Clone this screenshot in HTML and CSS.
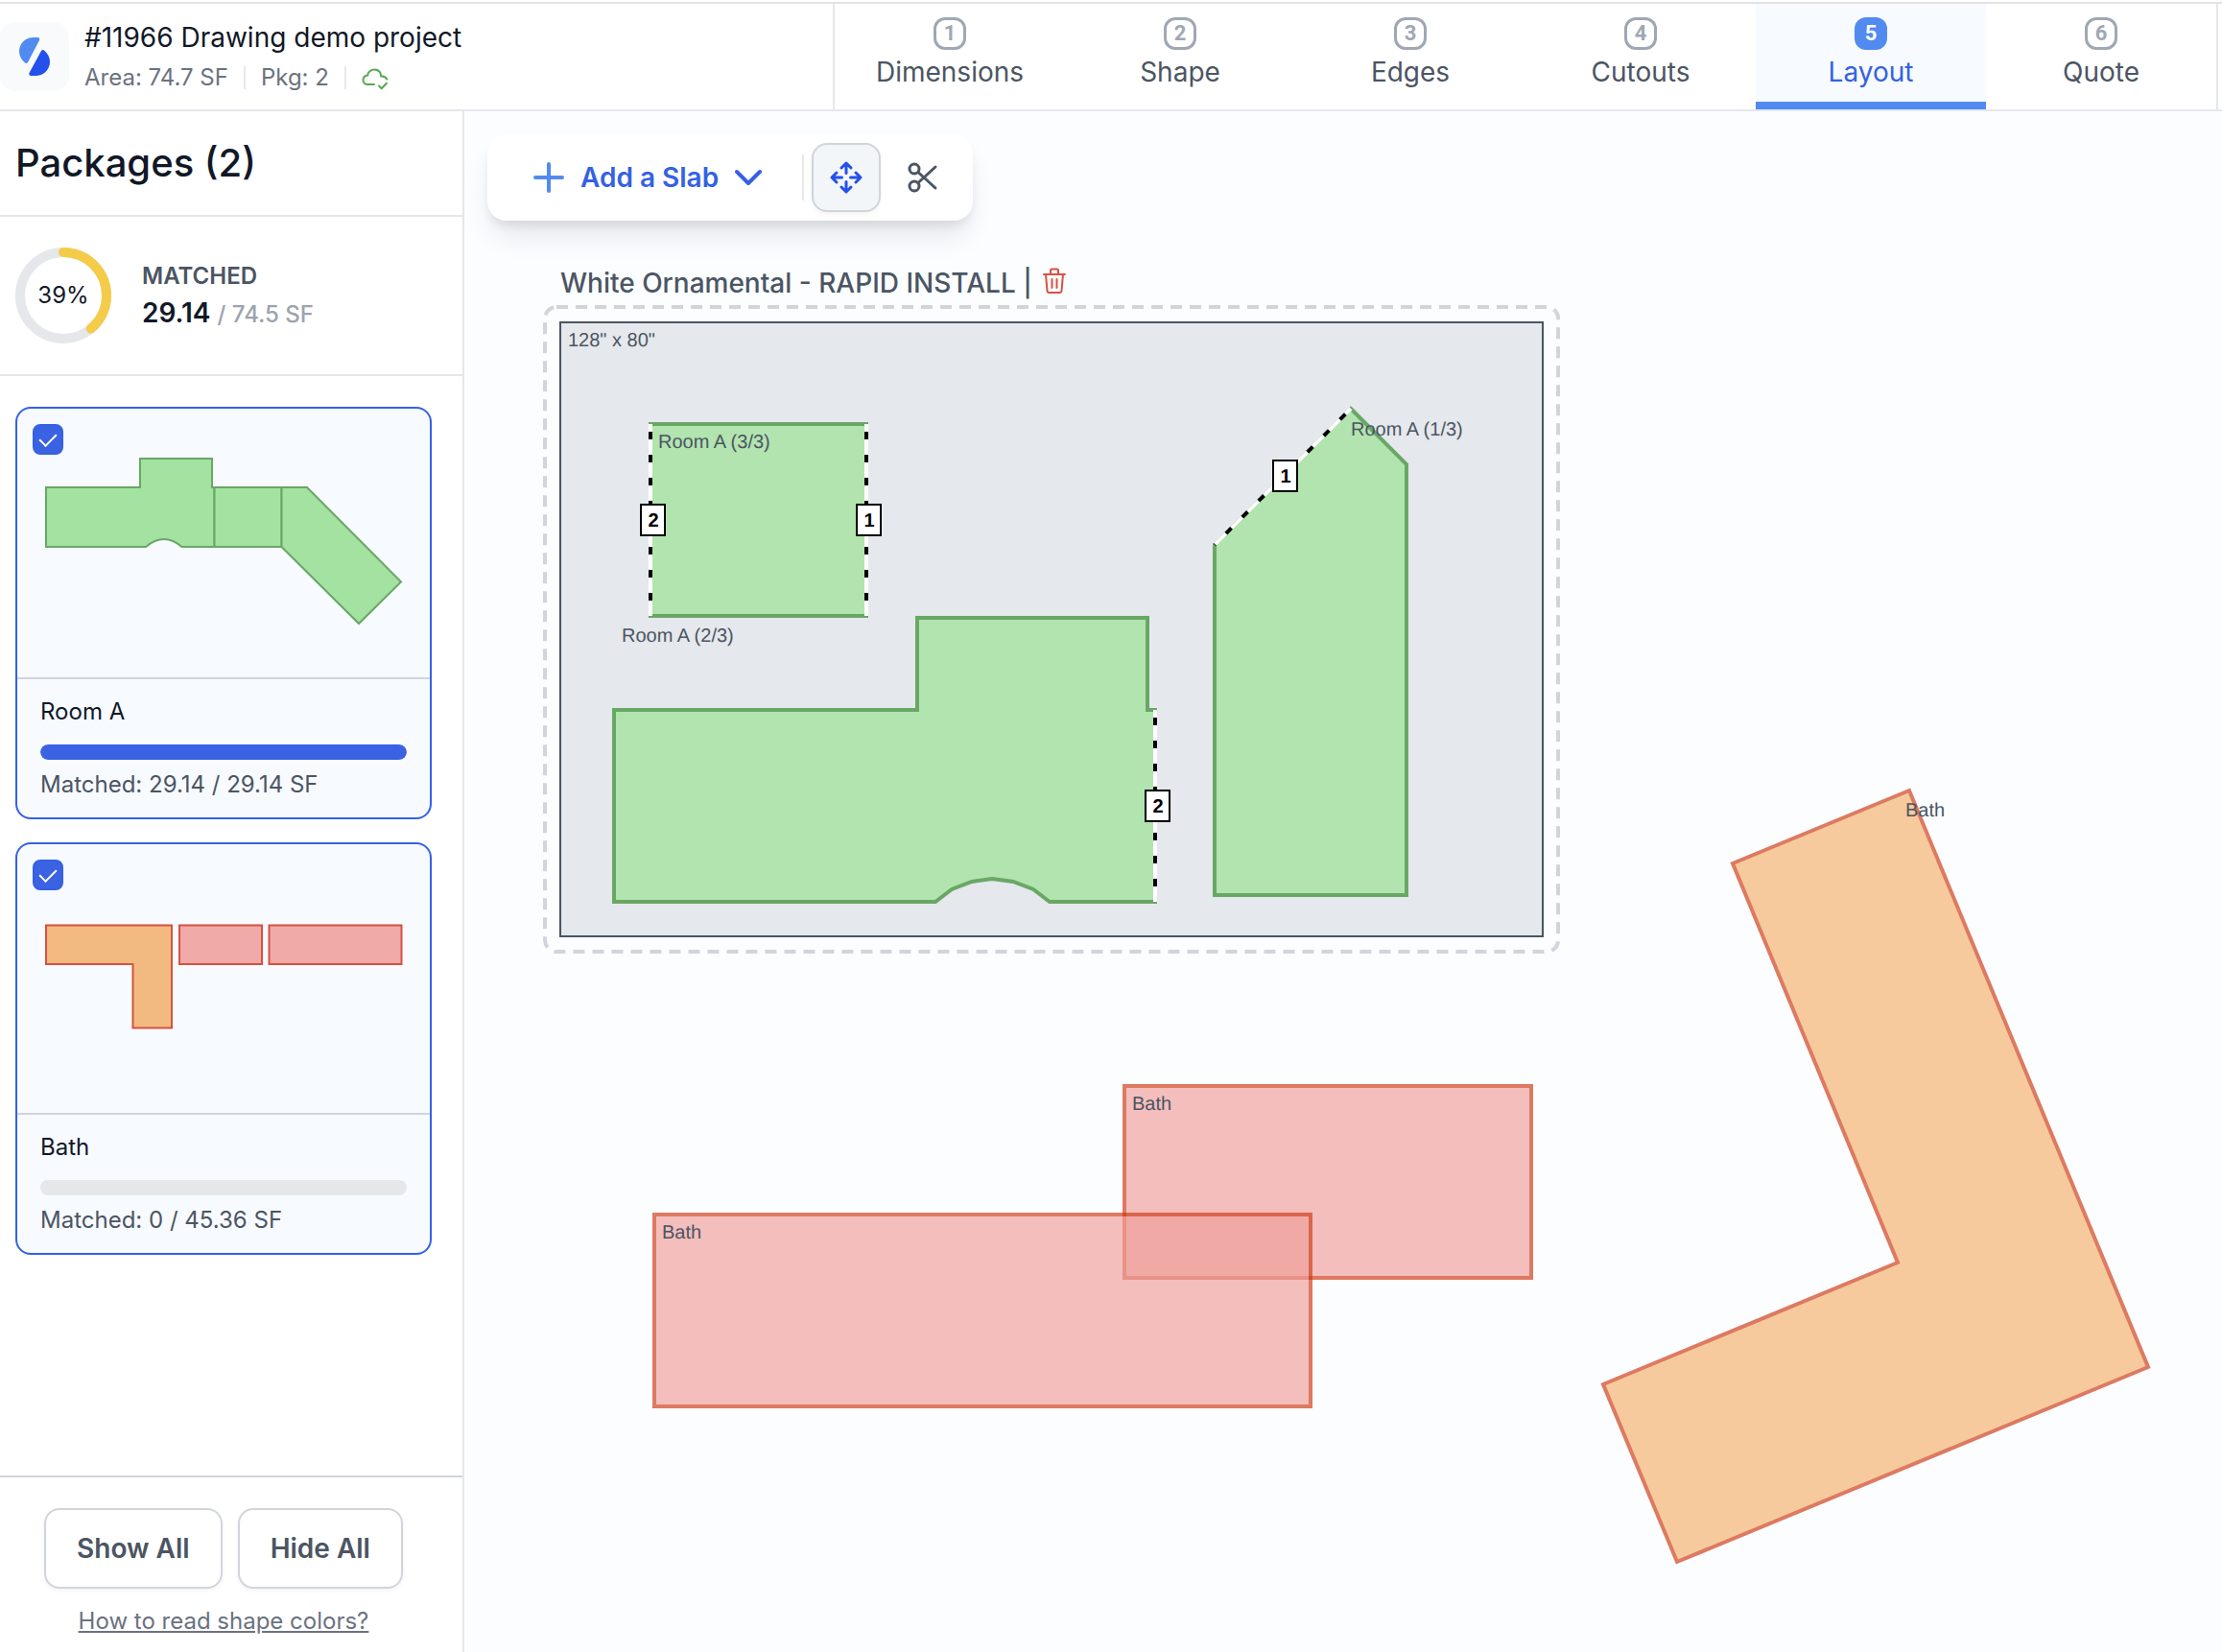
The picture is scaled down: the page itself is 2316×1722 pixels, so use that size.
FILE: index.html
```html
<!DOCTYPE html>
<html lang="en">
<head>
<meta charset="utf-8">
<meta name="viewport" content="width=device-width, initial-scale=1">
<title>#11966 Drawing demo project</title>
<link rel="stylesheet" href="styles.css">
</head>
<body>
<header class="topbar">
  <div class="project">
    <a class="logo" href="#" aria-label="Home">
      <svg width="32" height="40" viewBox="0 0 32 40" aria-hidden="true">
        <path class="logo-light" d="M15 0H19.500Q22 .5 21 3L9 26Q7.500 28 5.500 26C2 23 0 19 0 14.500C0 6 7 0 15 0Z"/>
        <path class="logo-dark" d="M23 14Q24.500 12 26.500 14C30 17 32 21 32 25.500C32 34 25 40 17 40H12.500Q9.500 39.500 10.500 37Z"/>
      </svg>
    </a>
    <div class="project-text">
      <h1 class="project-title">#11966 Drawing demo project</h1>
      <div class="project-meta">
        <span>Area: 74.7 SF</span>
        <span class="rule"></span>
        <span>Pkg: 2</span>
        <span class="rule"></span>
        <svg class="cloud" width="28" height="28" viewBox="0 0 28 28" aria-label="Saved">
          <path d="M13 21H6.500C3.500 21 1.500 19 1.500 16.500C1.500 13.500 3.500 11.700 6.300 11.500C6.300 8 9.500 5.500 13.500 5.500C17.500 5.500 20.500 8.500 20 12.500C23 12 25 13 26.300 15.500"/>
          <path d="M18 22.500L20.700 25.300L26 19.800"/>
        </svg>
      </div>
    </div>
  </div>
  <nav class="steps" aria-label="Steps">
    <a class="step" href="#"><span class="step-no">1</span><span class="step-name">Dimensions</span></a>
    <a class="step" href="#"><span class="step-no">2</span><span class="step-name">Shape</span></a>
    <a class="step" href="#"><span class="step-no">3</span><span class="step-name">Edges</span></a>
    <a class="step" href="#"><span class="step-no">4</span><span class="step-name">Cutouts</span></a>
    <a class="step step-active" href="#" aria-current="step"><span class="step-no">5</span><span class="step-name">Layout</span></a>
    <a class="step" href="#"><span class="step-no">6</span><span class="step-name">Quote</span></a>
  </nav>
</header>

<div class="shell">
  <aside class="sidebar">
    <h2 class="sidebar-title">Packages (2)</h2>
    <section class="summary">
      <div class="ring">
        <svg width="100" height="100" viewBox="0 0 100 100" aria-hidden="true">
          <circle class="ring-track" cx="50" cy="50" r="45"/>
          <circle class="ring-value" cx="50" cy="50" r="45" pathLength="100" stroke-dasharray="39 100" transform="rotate(-90 50 50)"/>
        </svg>
        <span class="ring-label">39%</span>
      </div>
      <div class="summary-text">
        <div class="summary-label">MATCHED</div>
        <div class="summary-value">29.14 <span class="summary-total">/ 74.5 SF</span></div>
      </div>
    </section>

    <div class="packages">
      <article class="card">
        <div class="preview">
          <input class="tick" type="checkbox" checked aria-label="Show Room A">
          <svg class="thumb thumb-green" viewBox="0 0 430 280" aria-hidden="true">
            <path d="M30 82H128V52H203V82H205.500V144H171.500Q153 128 134 144H30Z"/>
            <path d="M205.500 82H275.500V144H205.500Z"/>
            <path d="M275.500 82H302L400 180.500L356 224L275.500 144Z"/>
          </svg>
        </div>
        <div class="card-body">
          <h3 class="card-name">Room A</h3>
          <div class="bar" role="progressbar" aria-label="Room A matched" aria-valuenow="100"><div class="bar-fill" style="width:100%"></div></div>
          <p class="card-note">Matched: 29.14 / 29.14 SF</p>
        </div>
      </article>
      <article class="card">
        <div class="preview">
          <input class="tick" type="checkbox" checked aria-label="Show Bath">
          <svg class="thumb thumb-red" viewBox="0 0 430 280" aria-hidden="true">
            <path class="thumb-orange" d="M30 84.500H161V191.500H120.500V125H30Z"/>
            <path d="M169 84.500H255V125H169Z"/>
            <path d="M262.500 84.500H400.500V125H262.500Z"/>
          </svg>
        </div>
        <div class="card-body">
          <h3 class="card-name">Bath</h3>
          <div class="bar" role="progressbar" aria-label="Bath matched" aria-valuenow="0"><div class="bar-fill" style="width:0%"></div></div>
          <p class="card-note">Matched: 0 / 45.36 SF</p>
        </div>
      </article>
    </div>

    <footer class="sidebar-foot">
      <div class="foot-buttons">
        <button class="btn" type="button">Show All</button>
        <button class="btn" type="button">Hide All</button>
      </div>
      <a class="help" href="#">How to read shape colors?</a>
    </footer>
  </aside>

  <main class="workspace">
    <svg class="canvas" role="img" aria-label="Slab layout">
      <!-- origin at the slab's corner, 8 units to the inch -->
      <g transform="translate(100 220)">
        <rect class="frame" x="-16" y="-16" width="1056" height="672" rx="12"/>
        <rect class="slab" width="1024" height="640"/>
        <text class="tag" x="8" y="25">128" x 80"</text>

        <g transform="translate(56 308)">
          <path class="piece-green" d="M0 96H316V0H556V96H564V296H454L437 283L416 275L394 272L373 275L352 283L335 296H0Z"/>
          <path class="seam" d="M564 96V296"/>
          <path class="seam-dash" d="M564 96V296"/>
          <rect class="seam-box" x="554" y="180" width="25" height="32"/>
          <text class="seam-no" x="567" y="203">2</text>
          <text class="tag" x="8" y="25">Room A (2/3)</text>
        </g>

        <g transform="translate(94 106)">
          <path class="piece-green" d="M0 0H225V200H0Z"/>
          <path class="seam" d="M0 0V200M225 0V200"/>
          <path class="seam-dash" d="M0 0V200"/>
          <path class="seam-dash" d="M225 0V200"/>
          <rect class="seam-box" x="-10" y="84" width="25" height="32"/>
          <text class="seam-no" x="3" y="107">2</text>
          <rect class="seam-box" x="215" y="84" width="25" height="32"/>
          <text class="seam-no" x="228" y="107">1</text>
          <text class="tag" x="8" y="25">Room A (3/3)</text>
        </g>

        <g transform="translate(682 90)">
          <path class="piece-green" d="M142 0L200 58V507H0V142Z"/>
          <path class="seam" d="M142 0L0 142"/>
          <path class="seam-dash" d="M142 0L0 142"/>
          <rect class="seam-box" x="61" y="54" width="25" height="32"/>
          <text class="seam-no" x="74" y="77">1</text>
          <text class="tag" x="142" y="28">Room A (1/3)</text>
        </g>

        <g transform="translate(588 796)">
          <rect class="piece-red" width="424" height="200"/>
          <text class="tag" x="8" y="25">Bath</text>
        </g>
        <g transform="translate(98 930)">
          <rect class="piece-red" width="684" height="200"/>
          <text class="tag" x="8" y="25">Bath</text>
        </g>
        <path class="piece-orange" d="M1406 488L1222 564L1394 980L1087 1107L1164 1292L1655 1089Z"/>
        <text class="tag" x="1402" y="515">Bath</text>
      </g>
    </svg>

    <div class="slab-head">
      <span>White Ornamental - RAPID INSTALL |</span>
      <button class="trash" type="button" aria-label="Remove slab">
        <svg width="24" height="28" viewBox="0 0 24 28" aria-hidden="true">
          <path d="M1 7H23M8 7V3Q8 1.500 9.500 1.500H14.500Q16 1.500 16 3V7M3 7L4.500 24Q4.700 26 6.500 26H17.500Q19.300 26 19.500 24L21 7M9.500 12V21M14.500 12V21"/>
        </svg>
      </button>
    </div>

    <div class="toolbar">
      <button class="add" type="button">
        <svg width="32" height="32" viewBox="0 0 32 32" aria-hidden="true"><path class="add-plus" d="M16 2V30M2 16H30"/></svg>
        Add a Slab
        <svg width="28" height="20" viewBox="0 0 28 20" aria-hidden="true"><path class="add-chevron" d="M2 4L14 16L26 4"/></svg>
      </button>
      <span class="toolbar-rule"></span>
      <button class="tool tool-on" type="button" aria-label="Move">
        <svg width="36" height="36" viewBox="0 0 36 36" aria-hidden="true">
          <path d="M18 13.500V3M13 8L18 3L23 8M18 22.500V33M13 28L18 33L23 28M13.500 18H3M8 13L3 18L8 23M22.500 18H33M28 13L33 18L28 23"/>
        </svg>
      </button>
      <button class="tool" type="button" aria-label="Cut">
        <svg width="36" height="36" viewBox="0 0 36 36" aria-hidden="true">
          <circle cx="9" cy="9" r="5"/><circle cx="9" cy="27" r="5"/>
          <path d="M13 12.500L31 29M13 23.500L31 7"/>
        </svg>
      </button>
    </div>
  </main>
</div>
</body>
</html>
```

FILE: styles.css
```css
* { box-sizing: border-box; }

body {
  margin: 0;
  min-height: 100vh;
  padding-top: 2px;
  display: flex;
  flex-direction: column;
  background: #fff;
  color: #111827;
  font-family: Inter, "Liberation Sans", sans-serif;
  font-size: 24px;
}

h1, h2, h3, p { margin: 0; font-weight: 400; }
a { color: inherit; text-decoration: none; }
button { font: inherit; color: inherit; background: none; border: 0; padding: 0; cursor: pointer; }
svg { display: block; fill: none; stroke-linecap: round; stroke-linejoin: round; }

/* top bar */
.topbar {
  display: flex;
  justify-content: space-between;
  border-top: 2px solid #e2e2e3;
  border-bottom: 2px solid #e5e7eb;
  padding-right: 4px;
}
.project { display: flex; align-items: center; gap: 16px; }
.logo {
  width: 72px;
  height: 72px;
  border-radius: 16px;
  background: #f8fafb;
  display: grid;
  place-items: center;
}
.logo-light { fill: #518bf0; }
.logo-dark { fill: #2450eb; }
.project-text { padding-top: 2px; }
.project-title { font-size: 28px; line-height: 42px; }
.project-meta { display: flex; align-items: center; gap: 16px; line-height: 42px; color: #6b7280; }
.rule { width: 2px; height: 24px; background: #e5e7eb; }
.cloud { stroke: #56a94f; stroke-width: 2; }

.steps {
  display: flex;
  border-left: 2px solid #e5e7eb;
  border-right: 2px solid #e5e7eb;
}
.step {
  width: 240px;
  height: 110px;
  padding-top: 14px;
  display: flex;
  flex-direction: column;
  align-items: center;
  border-bottom: 8px solid transparent;
  color: #4b5563;
}
.step-no {
  width: 34px;
  height: 34px;
  border: 3px solid #a0a7b4;
  border-radius: 12px;
  color: #a0a7b4;
  font: 700 22px/28px Roboto, "Liberation Sans", sans-serif;
  text-align: center;
}
.step-name { font-size: 28px; line-height: 46px; }
.step-active { background: #f7fafe; border-bottom-color: #518bf0; color: #3461e3; }
.step-active .step-no { background: #518bf0; border-color: #518bf0; color: #fff; }

/* sidebar */
.shell { flex: 1; display: flex; }
.sidebar {
  flex: none;
  width: 484px;
  border-right: 2px solid #e5e7eb;
  display: flex;
  flex-direction: column;
}
.sidebar-title {
  padding: 30px 16px;
  font-size: 40px;
  font-weight: 500;
  line-height: 48px;
  border-bottom: 2px solid #e5e7eb;
}
.summary {
  display: flex;
  align-items: center;
  gap: 32px;
  padding: 32px 16px;
  border-bottom: 2px solid #e5e7eb;
}
.ring { display: grid; place-items: center; }
.ring > * { grid-area: 1 / 1; }
.ring-track { stroke: #e5e7eb; stroke-width: 10; }
.ring-value { stroke: #f4cc49; stroke-width: 10; }
.ring-label { padding-bottom: 2px; }
.summary-text { padding-top: 2px; }
.summary-label { font-weight: 600; line-height: 36px; color: #4b5563; }
.summary-value { font-size: 28px; font-weight: 600; line-height: 40px; }
.summary-total { font-size: 24px; font-weight: 500; color: #9ca3af; }

.packages { flex: 1; display: flex; flex-direction: column; gap: 24px; padding: 32px 32px 24px 16px; }
.card { border: 2px solid #3461e3; border-radius: 16px; background: #f7faff; }
.preview { position: relative; border-bottom: 2px solid #d1d5db; }
.thumb { width: 100%; stroke-width: 2; }
.thumb-green { fill: #a3e2a0; stroke: #69a765; stroke-linejoin: miter; }
.thumb-red { fill: #f0aaa8; stroke: #d85140; stroke-linejoin: miter; }
.thumb-orange { fill: #f2ba80; }
.tick {
  position: absolute;
  top: 16px;
  left: 16px;
  width: 32px;
  height: 32px;
  margin: 0;
  appearance: none;
  border-radius: 8px;
  border: 2px solid #3461e3;
  display: grid;
  place-items: center;
}
.tick:checked { background: #3a62e3; }
.tick:checked::before {
  content: "";
  width: 8px;
  height: 15px;
  border: solid #fff;
  border-width: 0 2px 2px 0;
  transform: translateY(-2px) rotate(45deg);
}
.card-body { padding: 16px 24px; }
.card-name { font-size: 24px; line-height: 36px; }
.bar { height: 16px; margin: 16px 0 8px; border-radius: 8px; background: #e5e7eb; overflow: hidden; }
.bar-fill { height: 100%; border-radius: 8px; background: #3a62e3; }
.card-note { line-height: 36px; color: #4b5563; }

.sidebar-foot {
  padding: 32px 16px 14px 0;
  border-top: 2px solid #d1d5db;
  display: flex;
  flex-direction: column;
  align-items: center;
  gap: 16px;
}
.foot-buttons { display: flex; gap: 16px; }
.btn {
  height: 84px;
  padding: 0 32px;
  border: 2px solid #d1d5db;
  border-radius: 16px;
  background: #fff;
  box-shadow: 0 2px 4px rgba(16, 24, 40, .05);
  font-size: 28px;
  font-weight: 600;
  color: #4b5563;
}
.help { line-height: 36px; color: #6b7280; text-decoration: underline; }

/* workspace */
.workspace { position: relative; flex: 1; min-width: 0; overflow: hidden; background: #fbfdff; }
.canvas {
  position: absolute;
  width: 100%;
  height: 100%;
  stroke-linecap: butt;
  stroke-linejoin: miter;
  text-rendering: geometricPrecision;
}
.frame { stroke: #d1d5db; stroke-width: 4; stroke-dasharray: 12 8; }
.slab { fill: #e5e8ec; stroke: #4b5563; stroke-width: 2; }
.piece-green { fill: #b2e4af; stroke: #69a765; stroke-width: 4; }
.piece-red { fill: #f09f9b; stroke: #ce3811; stroke-width: 4; opacity: .66; }
.piece-orange { fill: #f4b16c; stroke: #ce3811; stroke-width: 4; opacity: .66; }
.seam { stroke: #fff; stroke-width: 4; }
.seam-dash { stroke: #000; stroke-width: 4; stroke-dasharray: 8 16; stroke-dashoffset: -8; }
.seam-box { fill: #fff; stroke: #000; stroke-width: 2; }
.seam-no { fill: #000; font: 700 20px "Liberation Sans", Arial, sans-serif; text-anchor: middle; }
.tag { fill: #4b5563; font: 20px "Liberation Sans", Arial, sans-serif; }

.slab-head {
  position: absolute;
  top: 161px;
  left: 100px;
  display: flex;
  align-items: center;
  gap: 11px;
  font-size: 28px;
  font-weight: 500;
  line-height: 36px;
  color: #4b5563;
}
.trash { padding-bottom: 4px; stroke: #d85140; }
.trash svg { stroke-width: 2; }

.toolbar {
  position: absolute;
  top: 24px;
  left: 24px;
  padding: 9px 16px;
  display: flex;
  align-items: center;
  gap: 8px;
  border-radius: 20px;
  background: #fff;
  box-shadow: 0 20px 30px -6px rgba(16, 24, 40, .1), 0 8px 12px -4px rgba(16, 24, 40, .1);
}
.add {
  height: 72px;
  padding: 0 34px 0 32px;
  display: flex;
  align-items: center;
  gap: 17px;
  font-size: 28px;
  font-weight: 600;
  color: #3461e3;
}
.add-plus { stroke: #518bf0; stroke-width: 4; }
.add-chevron { stroke: #3461e3; stroke-width: 4; }
.toolbar-rule { width: 2px; height: 48px; background: #e5e7eb; }
.tool {
  width: 72px;
  height: 72px;
  display: grid;
  place-items: center;
  border-radius: 16px;
  stroke: #4b5563;
}
.tool svg { stroke-width: 3; }
.tool-on {
  border: 2px solid #d1d5db;
  background: #f3f6f9;
  box-shadow: 0 2px 4px rgba(16, 24, 40, .05);
  stroke: #2450eb;
}
```
